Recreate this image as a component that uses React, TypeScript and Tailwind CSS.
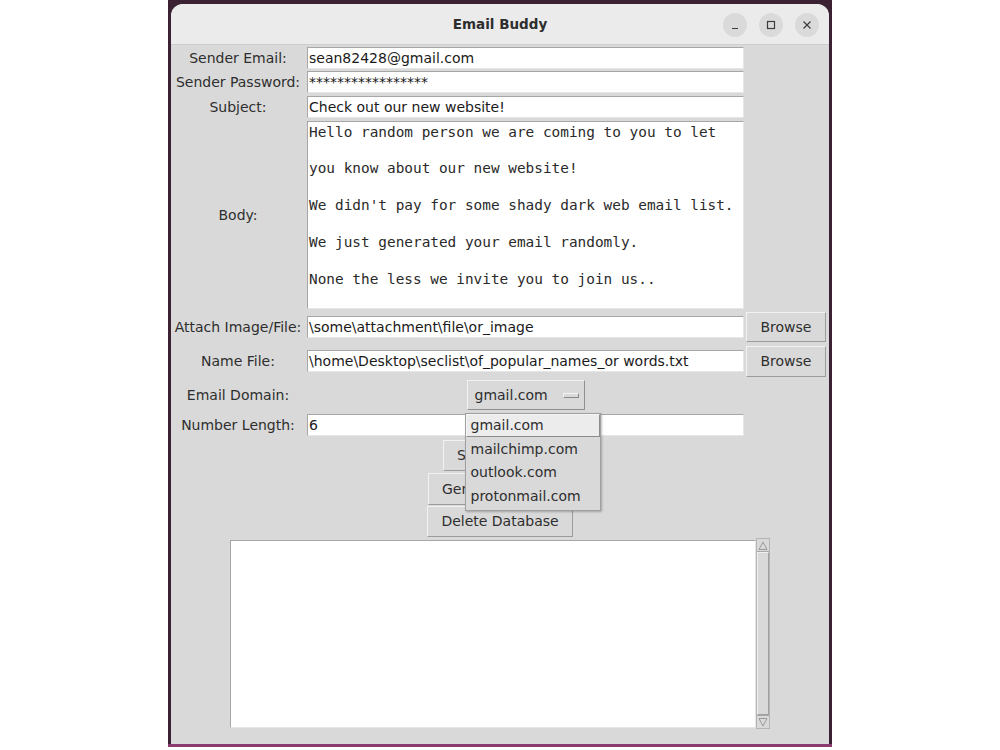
const sans = "font-['DejaVu_Sans',sans-serif]";
const mono = "font-['DejaVu_Sans_Mono',monospace]";

const bodyLines = [
  "Hello random person we are coming to you to let",
  "",
  "you know about our new website!",
  "",
  "We didn't pay for some shady dark web email list.",
  "",
  "We just generated your email randomly.",
  "",
  "None the less we invite you to join us..",
];

function Label({ children }: { children: string }) {
  return (
    <div className="text-center text-[14px] leading-[18px] whitespace-nowrap text-[#2e2e2e]">{children}</div>
  );
}

function Entry({ value }: { value: string }) {
  return (
    <div className="mx-[2px] h-[22px] overflow-hidden whitespace-nowrap border border-t-[#a6a6a6] border-l-[#a6a6a6] border-b-[#e6e6e6] border-r-[#e6e6e6] bg-white pl-[1px] text-[14px] leading-[20px] text-[#1a1a1a]">
      {value}
    </div>
  );
}

function TkButton({ label, className = "" }: { label: string; className?: string }) {
  return (
    <div
      className={`flex items-center justify-center whitespace-nowrap border border-t-[#f2f2f2] border-l-[#f2f2f2] border-b-[#9c9c9c] border-r-[#9c9c9c] bg-[#d9d9d9] px-[13px] text-[14px] text-[#2e2e2e] ${className}`}
    >
      {label}
    </div>
  );
}

function TitleButton({ children }: { children: React.ReactNode }) {
  return (
    <div className="flex h-[24px] w-[24px] items-center justify-center rounded-full bg-[#dadada]">
      <svg width="10" height="10" viewBox="0 0 10 10" fill="none" stroke="#3c3c3c" strokeWidth="1.2">
        {children}
      </svg>
    </div>
  );
}

function Scrollbar() {
  return (
    <div className="flex h-[191px] w-[14px] flex-col border border-[#b5b5b5] bg-[#d9d9d9]">
      <div className="flex h-[13px] items-center justify-center border-b border-[#a8a8a8]">
        <svg width="10" height="9" viewBox="0 0 10 9" fill="none" stroke="#9a9a9a" strokeWidth="1">
          <path d="M1 8.5 L5 1 L9 8.5 Z" />
        </svg>
      </div>
      <div className="flex-1 border border-t-[#f0f0f0] border-l-[#f0f0f0] border-b-[#a0a0a0] border-r-[#a0a0a0]" />
      <div className="flex h-[13px] items-center justify-center border-t border-[#a8a8a8]">
        <svg width="10" height="9" viewBox="0 0 10 9" fill="none" stroke="#9a9a9a" strokeWidth="1">
          <path d="M1 0.5 L5 8 L9 0.5 Z" />
        </svg>
      </div>
    </div>
  );
}

export default function App() {
  return (
    <div className={`min-h-screen bg-white ${sans}`}>
      <div className="ml-[168px] h-[747px] w-[664px] border-b-[3px] border-[#8a3c70] bg-[#3a2232] px-[3px] pt-[4px]">
        <div className="flex h-full flex-col overflow-hidden rounded-t-[12px] bg-[#d9d9d9]">
          {/* title bar */}
          <div className="relative flex h-[41px] items-center justify-center border-b border-[#cdcdcd] bg-[#ebebeb]">
            <span className="text-[13.5px] font-bold text-[#2e2e2e]">Email Buddy</span>
            <div className="absolute right-[10px] top-[9px] flex gap-[12px]">
              <TitleButton>
                <path d="M2 8.5 H8" />
              </TitleButton>
              <TitleButton>
                <rect x="1.5" y="1.5" width="7" height="7" />
              </TitleButton>
              <TitleButton>
                <path d="M1.5 1.5 L8.5 8.5 M8.5 1.5 L1.5 8.5" />
              </TitleButton>
            </div>
          </div>

          {/* form grid */}
          <div className="grid grid-cols-[134px_441px_83px] grid-rows-[25px_24px_25px_191px_34px_34px_34px_26px] items-center">
            <Label>Sender Email:</Label>
            <Entry value="sean82428@gmail.com" />
            <div />

            <Label>Sender Password:</Label>
            <Entry value="*****************" />
            <div />

            <Label>Subject:</Label>
            <Entry value="Check out our new website!" />
            <div />

            <Label>Body:</Label>
            <div
              className={`mx-[2px] h-[188px] overflow-hidden border border-t-[#a6a6a6] border-l-[#a6a6a6] border-b-[#e6e6e6] border-r-[#e6e6e6] bg-white pl-[1px] pt-[1px] text-[14.4px] leading-[18.4px] text-[#2a2a2a] ${mono}`}
            >
              {bodyLines.map((line, i) => (
                <div key={i} className="h-[18.4px] whitespace-pre">
                  {line}
                </div>
              ))}
            </div>
            <div />

            <Label>Attach Image/File:</Label>
            <Entry value={"\\some\\attachment\\file\\or_image"} />
            <TkButton label="Browse" className="h-[30px] w-[80px]" />

            <Label>Name File:</Label>
            <Entry value={"\\home\\Desktop\\seclist\\of_popular_names_or words.txt"} />
            <TkButton label="Browse" className="h-[31px] w-[80px]" />

            <Label>Email Domain:</Label>
            <div className="flex justify-center">
              <div className="relative">
                <div className="flex h-[30px] w-[118px] items-center border border-t-[#f2f2f2] border-l-[#f2f2f2] border-b-[#8f8f8f] border-r-[#8f8f8f] bg-[#d9d9d9] pl-[7px] text-[14px] text-[#2e2e2e]">
                  <span>gmail.com</span>
                  <span className="ml-auto mr-[5px] h-[5px] w-[16px] border border-t-[#f4f4f4] border-l-[#f4f4f4] border-b-[#8a8a8a] border-r-[#8a8a8a] bg-[#d9d9d9]" />
                </div>
                <div className="absolute left-[-2px] top-[33px] z-10 w-[136px] border border-[#a0a0a0] bg-[#d9d9d9] p-[0px] text-[14px] text-[#2e2e2e] shadow-[1px_1px_2px_rgba(0,0,0,0.25)]">
                  <div className="flex h-[23px] items-center border border-t-[#f6f6f6] border-l-[#f6f6f6] border-b-[#8c8c8c] border-r-[#8c8c8c] bg-[#ececec] pl-[4px]">
                    gmail.com
                  </div>
                  <div className="flex h-[24px] items-center pl-[5px]">mailchimp.com</div>
                  <div className="flex h-[23px] items-center pl-[5px]">outlook.com</div>
                  <div className="flex h-[24px] items-center pl-[5px]">protonmail.com</div>
                  <div className="h-[2px]" />
                </div>
              </div>
            </div>
            <div />

            <Label>Number Length:</Label>
            <Entry value="6" />
            <div />
          </div>

          {/* action buttons */}
          <div className="flex flex-col items-center">
            <TkButton label="Send Emails" className="mt-[2px] h-[31px] w-[114px]" />
            <TkButton label="Generate Emails" className="mt-[2px] h-[32px] w-[144px]" />
            <TkButton label="Delete Database" className="mt-[1px] h-[31px] w-[146px]" />
          </div>

          {/* output box */}
          <div className="mt-[1px] flex justify-center">
            <div className="mt-[2px] h-[188px] w-[526px] border border-t-[#a6a6a6] border-l-[#a6a6a6] border-b-[#e6e6e6] border-r-[#e6e6e6] bg-white" />
            <Scrollbar />
          </div>
        </div>
      </div>
    </div>
  );
}
